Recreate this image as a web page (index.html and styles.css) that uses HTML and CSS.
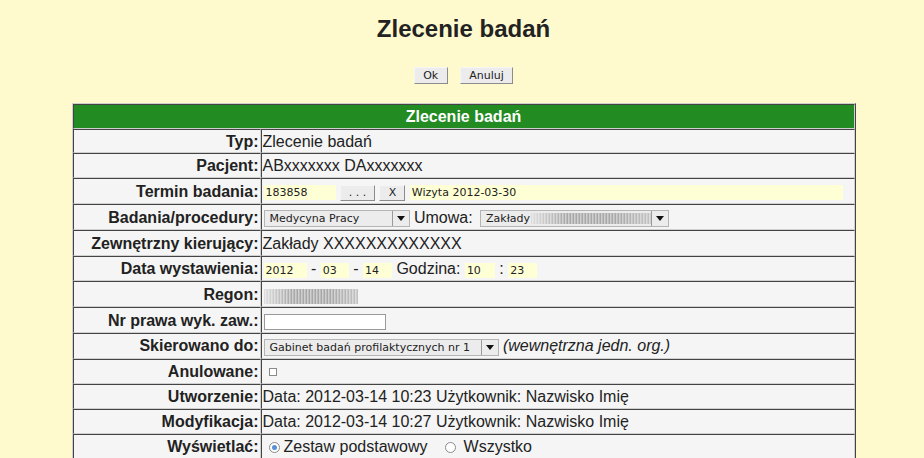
FILE: index.html
```html
<!DOCTYPE html>
<html lang="pl">
<head>
<meta charset="utf-8">
<title>Zlecenie badań</title>
<link rel="stylesheet" href="styles.css">
</head>
<body>
<div class="page">
  <h1 class="title">Zlecenie badań</h1>
  <div class="actions">
    <button class="btn">Ok</button>
    <button class="btn">Anuluj</button>
  </div>
  <table class="form">
    <tr><th colspan="2" class="head">Zlecenie badań</th></tr>
    <tr class="short"><td class="lbl">Typ:</td><td class="val">Zlecenie badań</td></tr>
    <tr><td class="lbl">Pacjent:</td><td class="val">ABxxxxxxx DAxxxxxxx</td></tr>
    <tr class="tall"><td class="lbl">Termin badania:</td><td class="val"><input class="field w-num" value="183858"> <button class="btn mini w-dots">. . .</button> <button class="btn mini w-x">X</button> <input class="field w-visit" value="Wizyta 2012-03-30"></td></tr>
    <tr class="tall"><td class="lbl">Badania/procedury:</td><td class="val"><span class="sel w-proc"><span class="sel-text">Medycyna Pracy</span><span class="sel-arrow"></span></span> Umowa: <span class="sel w-umowa"><span class="sel-text">Zakłady<span class="blur blur-umowa"></span></span><span class="sel-arrow"></span></span></td></tr>
    <tr class="tall"><td class="lbl">Zewnętrzny kierujący:</td><td class="val">Zakłady XXXXXXXXXXXXX</td></tr>
    <tr><td class="lbl">Data wystawienia:</td><td class="val"><input class="field w-y" value="2012"> - <input class="field w-m" value="03"> - <input class="field w-d" value="14"> Godzina: <input class="field w-h" value="10"> : <input class="field w-d" value="23"></td></tr>
    <tr class="tall"><td class="lbl">Regon:</td><td class="val"><span class="blur blur-regon"></span></td></tr>
    <tr class="tall"><td class="lbl">Nr prawa wyk. zaw.:</td><td class="val"><input class="plain" value=""></td></tr>
    <tr><td class="lbl">Skierowano do:</td><td class="val"><span class="sel w-gab"><span class="sel-text">Gabinet badań profilaktycznych nr 1</span><span class="sel-arrow"></span></span> <em class="note">(wewnętrzna jedn. org.)</em></td></tr>
    <tr><td class="lbl">Anulowane:</td><td class="val"><span class="check"></span></td></tr>
    <tr><td class="lbl">Utworzenie:</td><td class="val">Data: 2012-03-14 10:23 Użytkownik: Nazwisko Imię</td></tr>
    <tr><td class="lbl">Modyfikacja:</td><td class="val">Data: 2012-03-14 10:27 Użytkownik: Nazwisko Imię</td></tr>
    <tr><td class="lbl">Wyświetlać:</td><td class="val"><span class="radio on first"></span>Zestaw podstawowy<span class="radio second"></span>Wszystko</td></tr>
  </table>
</div>
</body>
</html>
```
FILE: styles.css
```css
html, body {
  margin: 0;
  background: #fffacd;
}
body {
  font-family: "Liberation Sans", Arial, sans-serif;
  color: #222;
}
.page {
  padding: 15px 0 0 3px;
}
.title {
  margin: 0;
  font-size: 24px;
  line-height: 28px;
  font-weight: bold;
  text-align: center;
}
.actions {
  margin-top: 24px;
  display: flex;
  justify-content: center;
  gap: 12px;
}
.btn {
  font: 11px/13px "DejaVu Sans", sans-serif;
  color: #222;
  background: #ececec;
  border: 1px solid;
  border-color: #f6f6f6 #8c8c8c #8c8c8c #f6f6f6;
  padding: 1px 8.5px;
  margin: 0;
  border-radius: 0;
}
.btn.mini {
  height: 16px;
  line-height: 14px;
  padding: 0;
  text-align: center;
  vertical-align: middle;
}
.w-dots { width: 35px; }
.w-x { width: 26px; }

.form {
  width: 784px;
  margin: 19px auto 0;
  border-collapse: separate;
  border-spacing: 0;
  border: 1px solid;
  border-color: #cfcfcf #444 #444 #cfcfcf;
  background: #f5f5f5;
}
.form th, .form td {
  border: 1px solid;
  border-color: #444 #d0d0d0 #d0d0d0 #444;
  font-size: 16px;
  line-height: 19px;
  padding: 2px 1px 2px 1px;
  white-space: nowrap;
}
.form tr.tall td {
  padding-top: 3px;
}
.form tr.short td {
  padding-bottom: 1px;
}
.head {
  background: #228b22;
  color: #fff;
  font-weight: bold;
  text-align: center;
}
.lbl {
  box-sizing: border-box;
  width: 188px;
  text-align: right;
  font-weight: bold;
}
.val {
  text-align: left;
}

.field {
  box-sizing: border-box;
  font: 11px "DejaVu Sans", sans-serif;
  color: #222;
  height: 15px;
  border: 0;
  padding: 0 2px;
  margin: 0;
  background: #ffffd5;
  vertical-align: middle;
  outline: none;
}
.val > .field:first-child,
.val > .sel:first-child,
.val > .plain:first-child,
.val > .blur:first-child { margin-left: 1px; }
.w-num { width: 72px; }
.w-visit { width: 433px; }
.w-y { width: 43px; }
.w-m { width: 28px; }
.w-d { width: 29px; }
.w-h { width: 30px; }

.plain {
  box-sizing: border-box;
  width: 122px;
  height: 16px;
  border: 1px solid #9a9a9a;
  background: #fff;
  margin: 0;
  padding: 0 2px;
  font: 11px "DejaVu Sans", sans-serif;
  vertical-align: middle;
}

.sel {
  display: inline-flex;
  box-sizing: border-box;
  height: 17px;
  border: 1px solid #b4b4b4;
  background: #ececec;
  font: 11px/15px "DejaVu Sans", sans-serif;
  color: #222;
  vertical-align: middle;
}
.sel-text {
  flex: 1;
  padding-left: 5px;
  display: flex;
  align-items: center;
  overflow: hidden;
}
.sel-arrow {
  width: 16px;
  border-left: 1px solid #9a9a9a;
  position: relative;
}
.sel-arrow::after {
  content: "";
  position: absolute;
  left: 4px;
  top: 5px;
  border-left: 4px solid transparent;
  border-right: 4px solid transparent;
  border-top: 5px solid #111;
}
.w-proc { width: 146px; }
.w-umowa { width: 189px; margin-left: 3px; }
.w-gab { width: 235px; }

.blur {
  display: inline-block;
  background:
    linear-gradient(90deg, rgba(245,245,245,0.7), rgba(245,245,245,0) 30%, rgba(245,245,245,0) 70%, rgba(245,245,245,0.35)),
    repeating-linear-gradient(90deg, #a8a8a8 0 1px, #cfcfcf 1px 2px, #bdbdbd 2px 3px);
}
.blur-umowa {
  width: 121px;
  height: 11px;
  margin-left: 1px;
}
.blur-regon {
  width: 94px;
  height: 15px;
  vertical-align: middle;
}

.note {
  font-style: italic;
}

.check {
  display: inline-block;
  box-sizing: border-box;
  width: 8px;
  height: 8px;
  border: 1px solid #8a8a8a;
  background: #fff;
  margin-left: 6px;
  vertical-align: middle;
}

.radio {
  display: inline-block;
  box-sizing: border-box;
  width: 11px;
  height: 11px;
  border: 1px solid #8a8a8a;
  border-radius: 50%;
  background: #fff;
  vertical-align: middle;
  position: relative;
}
.radio.on::after {
  content: "";
  position: absolute;
  left: 2px;
  top: 2px;
  width: 5px;
  height: 5px;
  border-radius: 50%;
  background: #5a8fd6;
}
.radio.first { margin: 0 4px 0 6px; }
.radio.second { margin: 0 8px 0 17px; }
```
